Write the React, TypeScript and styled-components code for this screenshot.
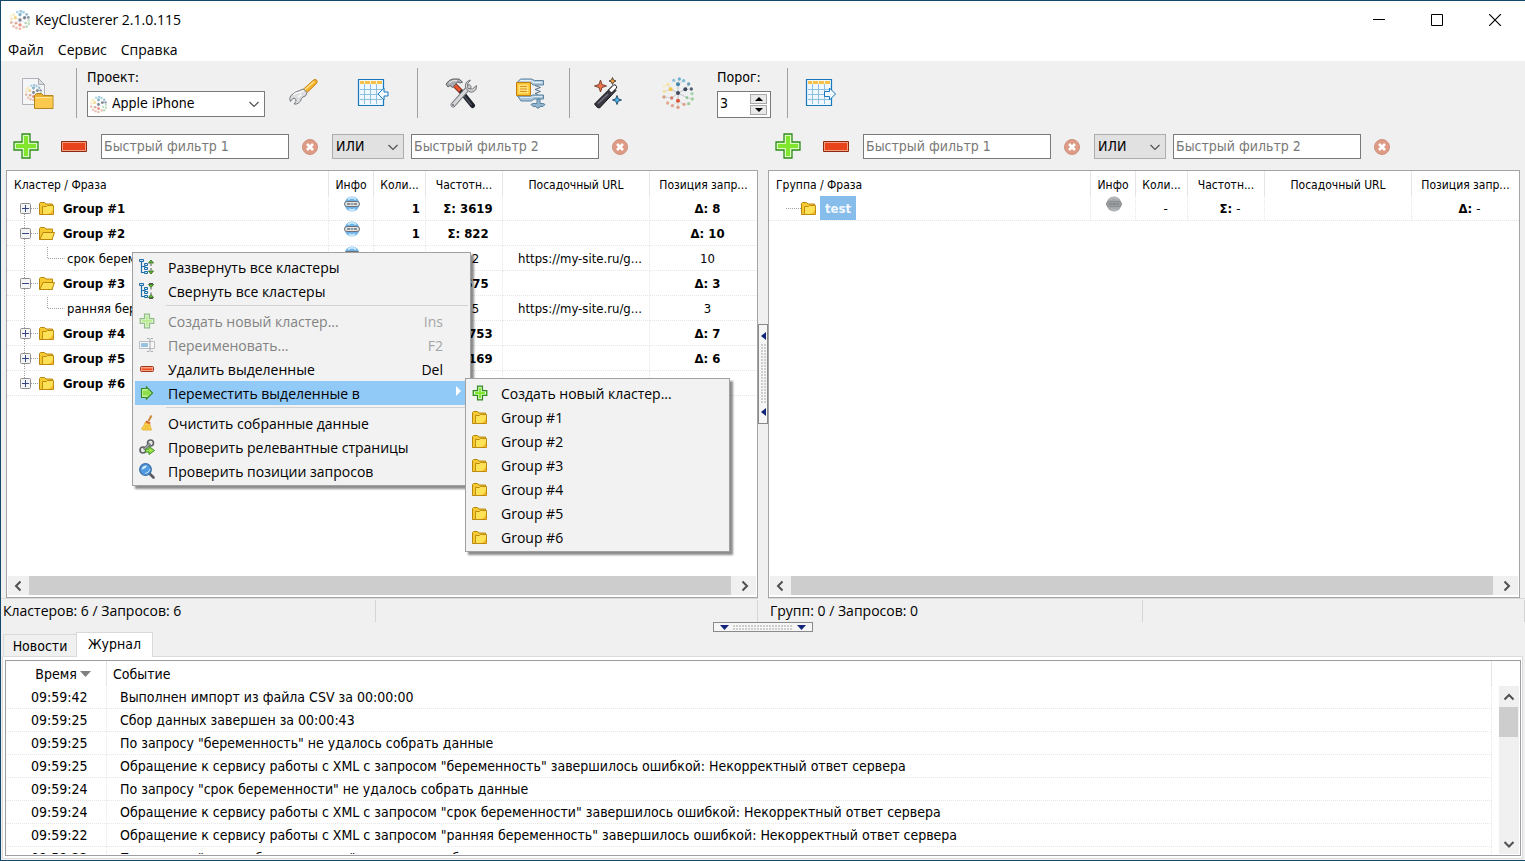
import React from "react";
import styled, { createGlobalStyle, css } from "styled-components";

const uiFont = `"Open Sans", "Noto Sans", sans-serif`;
const gridFont = `"DejaVu Sans Condensed", "DejaVu Sans", sans-serif`;

const GlobalStyle = createGlobalStyle`
  *, *::before, *::after { box-sizing: border-box; }
  body { margin: 0; background: #f0f0f0; color: #000; font-family: ${gridFont}; font-size: 13px; }
  button, input, select { font: inherit; color: inherit; margin: 0; padding: 0; border: 0; border-radius: 0; background: none; outline: 0; }
  button { display: flex; align-items: center; justify-content: center; }
  svg { display: block; flex: none; }
`;

const Window = styled.div`
  position: relative;
  display: flex;
  flex-direction: column;
  height: 100vh;
  overflow: hidden;
  border: solid #14496b;
  border-width: 1px 0 1px 1px;
  background: #f0f0f0;
`;

const TitleBar = styled.header`
  display: flex;
  align-items: center;
  flex: none;
  height: 37px;
  padding: 0 1px 0 9px;
  background: #fff;
  font: 14px/20px ${uiFont};
`;
const Title = styled.h1`
  flex: 1;
  margin: 0 0 0 5px;
  font: inherit;
`;
const CaptionButton = styled.button`
  width: 58px;
  height: 36px;
`;
const MenuBar = styled.nav`
  display: flex;
  flex: none;
  gap: 14px;
  height: 23px;
  padding: 1px 0 0 7px;
  background: #fff;
  font: 14px/22px ${uiFont};
`;

const Toolbar = styled.div`
  display: flex;
  flex: none;
  height: 65px;
  padding: 7px 2px 8px;
`;
const ToolButton = styled.button<{ $w?: number }>`
  flex: none;
  width: ${(p) => p.$w ?? 70}px;
  height: 50px;
`;
const Separator = styled.div<{ $before: number; $after: number }>`
  flex: none;
  width: 1px;
  height: 50px;
  margin: 0 ${(p) => p.$after}px 0 ${(p) => p.$before}px;
  background: #a0a0a0;
`;
const Field = styled.div<{ $w: number; $after?: number; $before?: number }>`
  display: flex;
  flex-direction: column;
  flex: none;
  gap: 5px;
  width: ${(p) => p.$w}px;
  margin: 0 ${(p) => p.$after ?? 0}px 0 ${(p) => p.$before ?? 0}px;
  font-size: 14px;
`;
const FieldLabel = styled.label`
  height: 18px;
  line-height: 18px;
`;
const Box = styled.div`
  display: flex;
  align-items: center;
  height: 26px;
  border: 1px solid #7a7a7a;
  background: #fff;
`;
const Combo = styled(Box)`
  padding: 0 4px 0 2px;
  gap: 5px;
`;
const ComboSelect = styled.select`
  flex: 1;
  min-width: 0;
  height: 24px;
  padding-bottom: 2px;
  appearance: none;
`;
const Spin = styled(Box)`
  height: 27px;
  padding: 0 3px 0 2px;
`;
const SpinInput = styled.input`
  flex: 1;
  min-width: 0;
  padding-bottom: 3px;
  appearance: textfield;
  &::-webkit-inner-spin-button { appearance: none; }
`;
const SpinButtons = styled.div`
  display: flex;
  flex-direction: column;
  gap: 1px;
`;
const SpinButton = styled.button`
  width: 17px;
  height: 10px;
  border: 1px solid #a8a8a8;
  background: #e9e9e9;
`;

const Workspace = styled.main`
  display: grid;
  grid-template-columns: minmax(0, 1fr) 10px minmax(0, 1fr);
  flex: 1;
  min-height: 0;
`;
const Pane = styled.section`
  display: flex;
  flex-direction: column;
  min-width: 0;
  min-height: 0;
`;
const FilterBar = styled.div<{ $side: "left" | "right" }>`
  display: flex;
  flex: none;
  align-items: flex-end;
  height: 44px;
  padding: 0 0 11px ${(p) => (p.$side === "left" ? 6 : 1)}px;
  font-size: 14px;
`;
const EditButton = styled.button`
  flex: none;
  width: 38px;
  height: 26px;
  margin-right: 10px;
`;
const FilterInput = styled.input`
  flex: none;
  width: 188px;
  height: 25px;
  padding: 0 2px 2px;
  border: 1px solid #7a7a7a;
  background: #fff;
  &::placeholder { color: #787878; opacity: 1; }
`;
const ClearButton = styled.button`
  flex: none;
  width: 42px;
  height: 25px;
`;
const LogicBox = styled.div`
  display: flex;
  align-items: center;
  flex: none;
  width: 72px;
  height: 25px;
  margin: 0 7px 0 1px;
  padding: 0 4px 0 3px;
  border: 1px solid #adadad;
  background: #e1e1e1;
`;
const FilterGroup = styled.div`
  display: flex;
  margin-left: -2px;
`;

const TreePanel = styled.div<{ $side: "left" | "right" }>`
  display: flex;
  flex-direction: column;
  flex: 1;
  min-height: 0;
  margin: ${(p) => (p.$side === "left" ? "0 0 0 5px" : "0 5px 0 0")};
  border: 1px solid #a3a3a8;
  background: #fff;
`;
const TreeBody = styled.div`
  flex: 1;
  min-height: 0;
  overflow: hidden;
`;
const DataTable = styled.table`
  width: 100%;
  table-layout: fixed;
  border-collapse: separate;
  border-spacing: 0;
`;
const Head = styled.th<{ $align?: string }>`
  height: 25px;
  padding: 2px 7px 0;
  border-right: 1px solid #e5e5e5;
  font-weight: 400;
  text-align: ${(p) => p.$align ?? "center"};
  white-space: nowrap;
  overflow: hidden;
  &:last-child { border-right: 0; }
`;
const TreeHead = styled(Head)`
  font-size: 12px;
  padding-left: ${(p) => (p.$align ? 7 : 0)}px;
  padding-right: 0;
`;
const dotted = css`
  border: dotted #e6e6e6;
  border-width: 0 1px 1px 0;
`;
const Cell = styled.td<{ $bold?: boolean; $align?: string }>`
  ${dotted}
  height: 25px;
  padding: 1px ${(p) => (p.$align === "right" ? 5 : 0)}px 0 8px;
  font-size: 13px;
  line-height: 16px;
  font-weight: ${(p) => (p.$bold ? 700 : 400)};
  text-align: ${(p) => p.$align ?? "center"};
  white-space: nowrap;
  overflow: hidden;
  &:last-child { border-right: 0; }
`;
const NameCell = styled(Cell)`
  padding: 0;
`;
const NameText = styled.span`
  padding-top: 1px;
`;
const Light = styled.span`
  font-weight: 400;
`;
const InfoCell = styled(Cell)`
  padding: 0 13px 8px 15px;
  line-height: 0;
`;
const NameRow = styled.div<{ $gap: number }>`
  display: flex;
  align-items: center;
  gap: ${(p) => p.$gap}px;
  height: 24px;
`;
const Selected = styled.span`
  height: 24px;
  padding: 0 5px;
  background: #86bdea;
  color: #f2f8fd;
  line-height: 25px;
`;

const HScroll = styled.div`
  display: flex;
  flex: none;
  height: 19px;
  margin: 0 1px 2px;
  background: #cdcdcd;
  justify-content: space-between;
`;
const ScrollButton = styled.button<{ $w: number; $h: number }>`
  flex: none;
  width: ${(p) => p.$w}px;
  height: ${(p) => p.$h}px;
  background: #f0f0f0;
`;

const StatusBar = styled.footer`
  display: grid;
  grid-template-columns: 375px 1fr;
  flex: none;
  height: 24px;
  padding: 1px 0;
  border-top: 1px solid #d9d9d9;
  font: 14px/22px ${uiFont};
`;
const StatusCell = styled.div`
  padding-left: 2px;
  border-right: 1px solid #d5d5d5;
`;

const SplitColumn = styled.div`
  display: flex;
  align-items: center;
`;
const Grip = styled.button<{ $vertical?: boolean }>`
  flex-direction: ${(p) => (p.$vertical ? "column" : "row")};
  width: ${(p) => (p.$vertical ? 10 : 100)}px;
  height: ${(p) => (p.$vertical ? 100 : 10)}px;
  gap: 4px;
  border: 1px solid #8a8a8a;
  background: #f6f6f6;
`;
const GripDots = styled.span<{ $vertical?: boolean }>`
  width: ${(p) => (p.$vertical ? 5 : 60)}px;
  height: ${(p) => (p.$vertical ? 60 : 5)}px;
  background: radial-gradient(circle at 1px 1px, #cfcfcf 1px, transparent 1px) 0 0 / 3px 3px;
`;

const Dock = styled.section`
  display: flex;
  flex-direction: column;
  flex: none;
  align-items: center;
  height: 238px;
  padding-bottom: 1px;
`;
const Tabs = styled.div`
  display: flex;
  align-items: flex-end;
  align-self: stretch;
  height: 25px;
  margin-bottom: -1px;
  padding-left: 2px;
  font-size: 14px;
  z-index: 1;
`;
const Tab = styled.button<{ $active?: boolean }>`
  width: ${(p) => (p.$active ? 77 : 73)}px;
  height: ${(p) => (p.$active ? 25 : 22)}px;
  margin-bottom: ${(p) => (p.$active ? 0 : 1)}px;
  padding-bottom: ${(p) => (p.$active ? 2 : 0)}px;
  border: 1px solid #d9d9d9;
  border-bottom: 0;
  border-right-width: ${(p) => (p.$active ? 1 : 0)}px;
  background: ${(p) => (p.$active ? "#fff" : "#f0f0f0")};
`;
const TabPage = styled.div`
  align-self: stretch;
  display: flex;
  flex: 1;
  min-height: 0;
  margin: 0 2px 0 1px;
  padding: 3px 1px 2px 2px;
  border: 1px solid #dcdcdc;
  background: #fff;
`;
const LogBox = styled.div`
  display: flex;
  flex: 1;
  min-width: 0;
  overflow: hidden;
  border: 1px solid #9d9da3;
  padding-bottom: 1px;
`;
const LogView = styled.div`
  flex: 1;
  min-width: 0;
  overflow: hidden;
  font-size: 14px;
`;
const LogHead = styled(Head)`
  padding: 0 0 0 ${(p) => (p.$align === "left" ? 6 : 14)}px;
  &:last-child { border-right: 1px solid #e5e5e5; }
`;
const SortLabel = styled.span`
  display: flex;
  align-items: center;
  justify-content: center;
  gap: 3px;
`;
const LogCell = styled.td<{ $indent: number }>`
  ${dotted}
  height: 23px;
  padding: 0 0 0 ${(p) => p.$indent}px;
  font-size: 14px;
  line-height: 20px;
  white-space: nowrap;
`;
const VScroll = styled.div`
  display: flex;
  flex-direction: column;
  flex: none;
  width: 20px;
  margin: 25px 1px 0 7px;
  background: #f0f0f0;
`;
const VThumb = styled.div`
  height: 30px;
  width: 19px;
  background: #cdcdcd;
`;
const VSpace = styled.div`
  flex: 1;
`;

const PopupMenu = styled.div<{ $x: number; $y: number; $w: number }>`
  position: absolute;
  left: ${(p) => p.$x}px;
  top: ${(p) => p.$y}px;
  width: ${(p) => p.$w}px;
  padding: 2px;
  border: 1px solid #a0a0a0;
  background: #f2f2f2;
  box-shadow: 3px 3px 2px rgba(0, 0, 0, 0.45);
  font: 14px/22px ${uiFont};
`;
const MenuItem = styled.button<{ $hot?: boolean }>`
  justify-content: flex-start;
  width: 100%;
  height: 24px;
  padding: 0 0 0 4px;
  background: ${(p) => (p.$hot ? "#91c9f7" : "none")};
  white-space: nowrap;
  &:disabled { color: #838383; }
  &:disabled svg { opacity: 0.5; }
`;
const MenuText = styled.span`
  flex: 1;
  margin-left: 13px;
  padding-top: 2px;
  text-align: left;
`;
const Shortcut = styled.span`
  margin-right: 25px;
  padding-top: 2px;
  ${MenuItem}:disabled & { color: #a5a5a5; }
`;
const MenuRule = styled.hr`
  height: 1px;
  margin: 2px 0 3px 31px;
  border: 0;
  background: #d2d2d2;
`;
const SubArrow = styled.svg`
  margin: 0 7px 5px 0;
`;

/* ---------- icons ---------- */

const clusterDots: [number, number, number, string][] = [
  [48, 48, 6, "#424a5c"], [48, 22, 6, "#3f86a8"], [35, 10, 5, "#8cc3da"], [52, 6, 5, "#6cb2d0"],
  [65, 11, 5, "#7dbbd6"], [80, 21, 5, "#6a9db6"], [70, 37, 6, "#39465c"], [88, 36, 5, "#52607a"],
  [90, 50, 5, "#a8d6ae"], [91, 66, 5, "#a3d0a0"], [80, 80, 5, "#9dcc9f"], [75, 62, 4, "#8cc393"],
  [48, 71, 6, "#de5236"], [66, 82, 5, "#e0a18c"], [48, 91, 5, "#e29a80"], [31, 86, 5, "#dfa58f"],
  [17, 78, 5, "#e3a88f"], [6, 60, 5, "#d79a84"], [29, 63, 5, "#cf7d66"], [26, 37, 6, "#f0c64c"],
  [18, 22, 5, "#f5e49c"], [6, 28, 4, "#f6ecb8"], [7, 43, 5, "#f3dfa0"],
];

const ClusterLogo = ({ size }: { size: number }) => (
  <svg width={size} height={size} viewBox="0 0 96 96" opacity={size < 24 ? 0.65 : 1}>
    {[1, 6, 12, 19, 18, 11].map((i) => (
      <path key={i} d={`M48 48L${clusterDots[i][0]} ${clusterDots[i][1]}`} stroke="#a9adb4" strokeWidth="2" />
    ))}
    {[[1, 2], [1, 3], [1, 4], [6, 5], [6, 7], [11, 9], [12, 13], [12, 14], [12, 15], [18, 17], [19, 20], [19, 22]].map(([a, b]) => (
      <path key={`${a}-${b}`} d={`M${clusterDots[a][0]} ${clusterDots[a][1]}L${clusterDots[b][0]} ${clusterDots[b][1]}`} stroke="#c4c8cd" strokeWidth="2" />
    ))}
    {clusterDots.map(([x, y, r, c]) => (
      <circle key={`${x}-${y}`} cx={x} cy={y} r={size < 24 ? r + 2 : r} fill={c} />
    ))}
  </svg>
);

const Chevron = ({ d, color = "#505050", w = 1.2 }: { d: "down" | "up" | "left" | "right"; color?: string; w?: number }) => {
  const paths = { down: "M1.500 4L6 8.500L10.500 4", up: "M1.500 8.500L6 4L10.500 8.500", left: "M7.500 1.500L3 6L7.500 10.500", right: "M4.500 1.500L9 6L4.500 10.500" };
  return (
    <svg width="12" height="12" viewBox="0 0 12 12">
      <path d={paths[d]} fill="none" stroke={color} strokeWidth={w} />
    </svg>
  );
};

const ProjectIcon = () => (
  <svg width="32" height="32" viewBox="0 0 32 32">
    <path d="M.5 1.500h16l6 6v20H.5z" fill="#f5f6f8" stroke="#b0b3b8" />
    <path d="M16.500 1.500v6h6z" fill="#dcdee2" stroke="#a6a9ae" />
    <g transform="translate(3 7)"><ClusterLogo size={17} /></g>
    <path d="M12.500 18.500l2-2h5l2 2h9.500v13h-18.500z" fill="#e8b02e" stroke="#b58522" />
    <path d="M13 20h17.500v11H13z" fill="#fbc94d" />
    <path d="M13.500 20.500h16.500" stroke="#fee69a" />
  </svg>
);

const WrenchIcon = () => (
  <svg width="32" height="32" viewBox="0 0 32 32">
    <path d="M16 12.500L26 3.500q2-2 3.500-.500t0 3.500L19.500 16z" fill="#f6b32c" stroke="#c58117" />
    <path d="M17.500 13L27 4.500" stroke="#ffe08a" strokeWidth="1.600" />
    <path d="M12.500 13.500l4-1.500 3.500 3.500-1.500 3.500q-3 .500-4 2.500-.500 3-3 4.500-2 1.500-4.500 1 2.500-2.500 2-4.500l-2-1.500q-2 .500-3.500 3.500-2-3 .500-6t8.500-5z" fill="#dcdee0" stroke="#77797e" />
    <path d="M6.500 17.500q4-2.500 7-2l3-2M11 20l3.500-2.500" fill="none" stroke="#fff" strokeWidth="1.300" />
  </svg>
);

const TableIcon = ({ out }: { out?: boolean }) => (
  <svg width="32" height="32" viewBox="0 0 32 32">
    <path d="M1.500 2.500h25v26h-25z" fill="#eef8fe" stroke="#1878bd" strokeWidth="1.200" />
    <path d="M3 4h22v3H3z" fill="#f6c04a" />
    <path d="M3 12.500h22M3 17.500h22M3 22.500h22M7.500 7v20M13.500 7v20M19.500 7v20" stroke="#8dc0dc" />
    <path d="M7.500 4v3M13.500 4v3M19.500 4v3" stroke="#fff3d0" />
    {out ? (
      <path d="M19.500 14.500h5v-3.500l6 6-6 6v-3.500h-5z" fill="#f2fafe" stroke="#1878bd" />
    ) : (
      <path d="M31 15h-4v-4l-6 6 6 6v-4h4z" fill="#f2fafe" stroke="#1878bd" />
    )}
  </svg>
);

const ToolsIcon = () => (
  <svg width="32" height="32" viewBox="0 0 32 32">
    <path d="M9.500 8l8 8" stroke="#7d3323" strokeWidth="5" />
    <path d="M9.500 8l8 8" stroke="#ec5630" strokeWidth="3" />
    <path d="M17 15.500l10.500 13" stroke="#1c2028" strokeWidth="5" strokeLinecap="round" />
    <path d="M17.500 17l9 11" stroke="#4e5663" strokeWidth="1.300" />
    <path d="M1 7q3-4.500 7-5h6l3.500 3-2 1-3-1-5 5.500-2.500-2-2 1.500z" fill="#a9acb0" stroke="#5d6064" />
    <path d="M4 6q3-3 8-2.500" stroke="#eee" fill="none" />
    <path d="M8 28L24 10" stroke="#77797d" strokeWidth="5" strokeLinecap="round" />
    <path d="M8 28L24 10" stroke="#d4d6d9" strokeWidth="3.300" strokeLinecap="round" />
    <path d="M25.500 3l-3 4 .500 4.500 4.500.500 4-3.500q.500 4-2.500 6-3 1.500-5 0l-3-3q-1.500-3 0-5.500t4.500-3z" fill="#cfd1d4" stroke="#77797d" />
    <circle cx="8" cy="28" r="1" fill="#6b6d70" />
  </svg>
);

const ArchiveIcon = () => (
  <svg width="32" height="32" viewBox="0 0 32 32">
    <path d="M2.500 5l3-3h11l3 1.500h9v4.500H18l-2-2H2.500z" fill="#b4cbde" stroke="#5b84a3" />
    <path d="M5 3.500h11l3 2h8" stroke="#e6f0f7" fill="none" />
    <path d="M2.500 19h13l2-1h11v4H19l-2.500 2H6z" fill="#a7c3d9" stroke="#5b84a3" />
    <path d="M5 20.500h11l3-1h8" stroke="#dde9f2" fill="none" />
    <path d="M20 8.500l5.500 2-5.500 2 5.500 2-5.500 2 3 1" fill="none" stroke="#55708a" />
    <path d="M22 22h3v4.500h3l2 1-2 2h-3l-1 1.500h-2l-1-1.500h-3l-2-2 2-1h4z" fill="#93b4cd" stroke="#5b84a3" />
    <path d="M1.500 5.500h14v13h-14z" fill="#fbc22f" stroke="#c57e12" />
    <path d="M3.500 7.500h10v9h-10z" fill="#ffe27a" />
    <path d="M5 9.500h7M5 12h7M5 14.500h7" stroke="#d48f1c" />
  </svg>
);

const WandIcon = () => (
  <svg width="32" height="32" viewBox="0 0 32 32">
    <path d="M5.500 30.500l-3-3.500L20 9.500l4 4L7.500 31z" fill="#3a3844" stroke="#111" />
    <path d="M16.500 13l5-5q1.500-.500 2.500.500t.500 2.500l-5 5z" fill="#fff" stroke="#16141c" />
    <path d="M6 26.500L16 17" stroke="#77757f" strokeWidth="1.300" />
    <path d="M8.500 3l1.500 4.500 4.500 1.500-4.500 1.500L8.500 15 7 10.500 2.500 9 7 7.500z" fill="#ef7448" stroke="#7a4130" />
    <path d="M20.500 .5l1 2.500 2.500 1-2.500 1-1 2.500-1-2.500-2.500-1 2.500-1z" fill="#f9a33b" stroke="#5c4a3a" />
    <path d="M25 18.500l1.200 3.300 3.300 1.200-3.300 1.200L25 27.500l-1.200-3.300L20.500 23l3.300-1.200z" fill="#4db4ec" stroke="#27506c" />
  </svg>
);

const PlusIcon = ({ size = 26 }: { size?: number }) => (
  <svg width={size} height={size} viewBox="0 0 26 26">
    <path d={size > 20 ? "M9 1h8v8h8v8h-8v8H9v-8H1V9h8z" : "M9 2h8v7h7v8h-7v7H9v-7H2V9h7z"} fill="#d9fbc0" stroke="#2f8a1c" strokeWidth={size > 20 ? 1.3 : 2} />
    <path d={size > 20 ? "M11 3h4v8h8v4h-8v8h-4v-8H3v-4h8z" : "M11.500 5h3v6.500H21v3h-6.500V21h-3v-6.500H5v-3h6.500z"} fill="#82e62f" />
  </svg>
);

const MinusIcon = () => (
  <svg width="26" height="11" viewBox="0 0 26 11">
    <path d="M.5.5h25v10H.5z" fill="#f0a080" stroke="#8e2a10" />
    <path d="M2 2h22v7H2z" fill="#e8441b" />
  </svg>
);

const SmallMinusIcon = () => (
  <svg width="16" height="16" viewBox="0 0 16 16">
    <rect x="1.500" y="5.500" width="13" height="5" rx="1" fill="#f6a184" stroke="#a3361a" />
    <path d="M3 7.500h10v1.500H3z" fill="#ea481d" />
  </svg>
);

const ClearIcon = () => (
  <svg width="16" height="16" viewBox="0 0 16 16">
    <circle cx="8" cy="8" r="7.500" fill="#dd9a84" stroke="#cf917d" />
    <path d="M5 5l6 6M11 5l-6 6" stroke="#fff" strokeWidth="2.600" />
  </svg>
);

const FolderIcon = ({ open }: { open?: boolean }) => (
  <svg width="16" height="16" viewBox="0 0 16 16">
    <path d="M.5 14.500v-11l1-1h4l1.500 1.500h6.500v10.500z" fill="#f6cb32" stroke="#b8860c" />
    {open ? (
      <path d="M.8 14.500L4 7.500h11.500l-2.500 7z" fill="#fddf55" stroke="#b8860c" />
    ) : (
      <>
        <path d="M3.500 6.500h4l1-1h6v9h-11z" fill="#fde257" stroke="#c08c10" />
        <path d="M14 9v5H9q4-1.500 5-5z" fill="#f7b92a" />
      </>
    )}
  </svg>
);

const LinkIcon = ({ muted }: { muted?: boolean }) => (
  <svg width="16" height="16" viewBox="0 0 16 16">
    <circle cx="8" cy="8" r="7.500" fill={muted ? "#a6a9ab" : "#6fb3e6"} />
    <path d="M4 3.500Q8 0 12 3.500M5 13q3 2.500 6 0" fill="none" stroke={muted ? "#b4b6b8" : "#c6e8fb"} strokeWidth="2" />
    <rect x=".5" y="5.500" width="15" height="5" rx="2.500" fill={muted ? "#9da0a2" : "#e4e6e7"} stroke={muted ? "#8b8e90" : "#6b6f72"} />
    <path d="M3 8h3M10 8h3" stroke={muted ? "#85888a" : "#6e7275"} strokeWidth="1.400" />
    <path d="M6.500 8h3" stroke={muted ? "#85888a" : "#9a9ea1"} strokeWidth="2" />
  </svg>
);

const TreeIcon = ({ collapse }: { collapse?: boolean }) => (
  <svg width="16" height="16" viewBox="0 0 16 16">
    <path d="M2.500 3v10.500h4M2.500 7.500h4" fill="none" stroke="#1d6fa8" strokeWidth="1.200" />
    <path d="M.5.5h4v2h-4zM5.500 4.500h3v2h-3zM5.500 8.500h3v2h-3zM5.500 12.500h3v2h-3z" fill="#c9e5f6" stroke="#1d6fa8" />
    <path d={collapse ? "M9.500 1.500h5L12 4.500zM9.500 14.500h5L12 11.500z" : "M9.500 4h5L12 1zM9.500 12h5L12 15z"} fill="#6cbf3c" stroke="#3f7a2a" />
    <path d={collapse ? "M12 4.500v2M12 9.500v2M10 .500h4M10 15.500h4" : "M12 4.500v2.500M12 9v2.500"} stroke="#555" />
  </svg>
);

const RenameIcon = () => (
  <svg width="16" height="16" viewBox="0 0 16 16">
    <path d="M.5 4.500h15v7H.5z" fill="#fff" stroke="#7d8a94" />
    <path d="M2 6h7v4H2z" fill="#3f94cf" />
    <path d="M8 1.500h2l1 1 1-1h2M8 14.500h2l1-1 1 1h2M11 2.500v11" fill="none" stroke="#55606a" />
  </svg>
);

const MoveIcon = () => (
  <svg width="16" height="16" viewBox="0 0 16 16">
    <path d="M2.500 3.500h5v-1.500l6 6-6 6v-1.500h-5z" fill="#c9f3a3" stroke="#388a27" strokeWidth="1.200" />
    <path d="M4 5.500h4.500v-1l3.500 3.500-3.500 3.500v-1H4z" fill="#8be048" />
  </svg>
);

const BroomIcon = () => (
  <svg width="16" height="16" viewBox="0 0 16 16">
    <path d="M12.500.5L9.500 6" stroke="#c98a3a" strokeWidth="2" />
    <path d="M7.500 5.500l4 2-.500 2-5-2z" fill="#d8642c" />
    <path d="M6 7.500l5 2q.500 3 1.500 5.500H3.500l-1-1.500Q5 11.500 6 7.500z" fill="#fbd24a" stroke="#dca42a" strokeWidth=".7" />
    <path d="M6 14l1.500-4M9 14.500v-4" stroke="#e2a629" strokeWidth=".7" />
  </svg>
);

const LinkCheckIcon = () => (
  <svg width="16" height="16" viewBox="0 0 16 16">
    <circle cx="11.500" cy="4" r="3" fill="#e4e6e7" stroke="#5f6265" strokeWidth="1.600" />
    <circle cx="4" cy="11" r="3" fill="#e4e6e7" stroke="#5f6265" strokeWidth="1.600" />
    <path d="M5 10.500l6-6" stroke="#6d7073" strokeWidth="3" />
    <path d="M5.500 10l5-5" stroke="#c9cbcd" />
    <path d="M6.500 10h3.500V7.500l5.500 4-5.500 4V13H6.500z" fill="#9be34b" stroke="#3f8a27" />
  </svg>
);

const SearchIcon = () => (
  <svg width="16" height="16" viewBox="0 0 16 16">
    <path d="M10.500 10.500l4 4" stroke="#5a5d63" strokeWidth="2.600" strokeLinecap="round" />
    <circle cx="6.500" cy="6.500" r="5.800" fill="#4f9ae0" stroke="#3c6ea6" strokeWidth="1.300" />
    <path d="M2.500 6.500q1-4 5.500-4Q7 5.500 2.500 6.500z" fill="#dff0fc" />
    <path d="M6 10.500q4-.500 5-4.500" stroke="#bfe0fa" fill="none" />
  </svg>
);

const Triangle = ({ d, w, h, color }: { d: string; w: number; h: number; color: string }) => (
  <svg width={w} height={h} viewBox={`0 0 ${w} ${h}`}><path d={d} fill={color} /></svg>
);

/* Connector lines and the expand box on the left of a tree row */
type NodeKind = "closed" | "open" | "leaf" | "single";
const TreeLines = ({ kind, first, last }: { kind: NodeKind; first?: boolean; last?: boolean }) => {
  const line = { stroke: "#a0a0a0", strokeDasharray: "1 1", fill: "none" };
  if (kind === "single") return <svg width="32" height="24"><path d="M17 12.500h15" {...line} /></svg>;
  if (kind === "leaf")
    return (
      <svg width="58" height="24">
        <path d="M17.500 0v24M40.500 1v11.500h17" {...line} />
      </svg>
    );
  return (
    <svg width="32" height="24">
      {!first && <path d="M17.500 0v8" {...line} />}
      {!last && <path d="M17.500 18v6" {...line} />}
      <path d="M24 12.500h8" {...line} />
      <rect x="13.500" y="7.500" width="10" height="10" rx="1" fill="#f4f4f4" stroke="#8e8e8e" />
      <path d={kind === "closed" ? "M15 12.500h7M18.500 9v7" : "M15 12.500h7"} stroke="#34458a" />
    </svg>
  );
};

/* ---------- tree tables ---------- */

type Row = { kind: NodeKind; name: string; count?: string; freq: string; url?: string; pos: string };

const clusters: Row[] = [
  { kind: "closed", name: "Group #1", count: "1", freq: "Σ: 3619", pos: "Δ: 8" },
  { kind: "open", name: "Group #2", count: "1", freq: "Σ: 822", pos: "Δ: 10" },
  { kind: "leaf", name: "срок беременности", freq: "822", url: "https://my-site.ru/g...", pos: "10" },
  { kind: "open", name: "Group #3", count: "1", freq: "Σ: 675", pos: "Δ: 3" },
  { kind: "leaf", name: "ранняя беременность", freq: "675", url: "https://my-site.ru/g...", pos: "3" },
  { kind: "closed", name: "Group #4", count: "1", freq: "Σ: 2753", pos: "Δ: 7" },
  { kind: "closed", name: "Group #5", count: "1", freq: "Σ: 1169", pos: "Δ: 6" },
  { kind: "closed", name: "Group #6", count: "1", freq: "Σ: 1020", pos: "Δ: 9" },
];
const groups: Row[] = [{ kind: "single", name: "test", count: "-", freq: "Σ: -", pos: "Δ: -" }];

/* An empty total keeps its bold sign but shows a regular dash */
const Total = ({ value }: { value: string }) =>
  value.endsWith("-") ? <>{value.slice(0, -1)}<Light>-</Light></> : <>{value}</>;

const TreeTable = ({ title, rows }: { title: string; rows: Row[] }) => (
  <DataTable>
    <colgroup>
      <col />
      <col style={{ width: 45 }} />
      <col style={{ width: 52 }} />
      <col style={{ width: 77 }} />
      <col style={{ width: 147 }} />
      <col style={{ width: 107 }} />
    </colgroup>
    <thead>
      <tr>
        <TreeHead $align="left">{title}</TreeHead>
        <TreeHead>Инфо</TreeHead>
        <TreeHead>Коли...</TreeHead>
        <TreeHead>Частотн...</TreeHead>
        <TreeHead>Посадочный URL</TreeHead>
        <TreeHead>Позиция запр...</TreeHead>
      </tr>
    </thead>
    <tbody>
      {rows.map((r, i) => {
        const bold = r.kind !== "leaf";
        return (
          <tr key={r.name}>
            <NameCell $bold={bold} $align="left">
              <NameRow $gap={r.kind === "leaf" ? 2 : r.kind === "single" ? 3 : 8}>
                <NameRow $gap={0}>
                  <TreeLines kind={r.kind} first={i === 0} last={i === rows.length - 1} />
                  {bold && <FolderIcon open={r.kind === "open"} />}
                </NameRow>
                {r.kind === "single" ? <Selected>{r.name}</Selected> : <NameText>{r.name}</NameText>}
              </NameRow>
            </NameCell>
            <InfoCell><LinkIcon muted={r.kind === "single"} /></InfoCell>
            <Cell $bold={r.count !== "-"} $align={r.count === "-" ? "center" : "right"}>{r.count}</Cell>
            <Cell $bold={bold}><Total value={r.freq} /></Cell>
            <Cell>{r.url}</Cell>
            <Cell $bold={bold}><Total value={r.pos} /></Cell>
          </tr>
        );
      })}
    </tbody>
  </DataTable>
);

const TreePane = ({ side, title, rows, status }: { side: "left" | "right"; title: string; rows: Row[]; status: string }) => (
  <Pane>
    <FilterBar $side={side}>
      <EditButton aria-label="Добавить"><PlusIcon /></EditButton>
      <EditButton aria-label="Удалить"><MinusIcon /></EditButton>
      <FilterGroup>
        <FilterInput type="text" placeholder="Быстрый фильтр 1" aria-label="Быстрый фильтр 1" />
        <ClearButton aria-label="Очистить фильтр 1"><ClearIcon /></ClearButton>
        <LogicBox>
          <ComboSelect aria-label="Логика фильтров" defaultValue="or">
            <option value="or">ИЛИ</option>
            <option value="and">И</option>
          </ComboSelect>
          <Chevron d="down" />
        </LogicBox>
        <FilterInput type="text" placeholder="Быстрый фильтр 2" aria-label="Быстрый фильтр 2" />
        <ClearButton aria-label="Очистить фильтр 2"><ClearIcon /></ClearButton>
      </FilterGroup>
    </FilterBar>
    <TreePanel $side={side}>
      <TreeBody><TreeTable title={title} rows={rows} /></TreeBody>
      <HScroll>
        <ScrollButton $w={21} $h={19} aria-label="Влево"><Chevron d="left" w={2} /></ScrollButton>
        <ScrollButton $w={25} $h={19} aria-label="Вправо"><Chevron d="right" w={2} /></ScrollButton>
      </HScroll>
    </TreePanel>
    <StatusBar>
      <StatusCell>{status}</StatusCell>
      <StatusCell />
    </StatusBar>
  </Pane>
);

/* ---------- log ---------- */

const log: [string, string][] = [
  ["09:59:42", "Выполнен импорт из файла CSV за 00:00:00"],
  ["09:59:25", "Сбор данных завершен за 00:00:43"],
  ["09:59:25", 'По запросу "беременность" не удалось собрать данные'],
  ["09:59:25", 'Обращение к сервису работы с XML с запросом "беременность" завершилось ошибкой: Некорректный ответ сервера'],
  ["09:59:24", 'По запросу "срок беременности" не удалось собрать данные'],
  ["09:59:24", 'Обращение к сервису работы с XML с запросом "срок беременности" завершилось ошибкой: Некорректный ответ сервера'],
  ["09:59:22", 'Обращение к сервису работы с XML с запросом "ранняя беременность" завершилось ошибкой: Некорректный ответ сервера'],
  ["09:59:22", 'По запросу "ранняя беременность" не удалось собрать данные'],
];

export default function App() {
  return (
    <Window>
      <GlobalStyle />
      <TitleBar>
        <ClusterLogo size={20} />
        <Title>KeyClusterer 2.1.0.115</Title>
        <CaptionButton aria-label="Свернуть">
          <svg width="12" height="12"><path d="M0 5.500h12" stroke="#000" /></svg>
        </CaptionButton>
        <CaptionButton aria-label="Развернуть">
          <svg width="12" height="12"><path d="M.5.5h11v11H.5z" fill="none" stroke="#000" /></svg>
        </CaptionButton>
        <CaptionButton aria-label="Закрыть">
          <svg width="12" height="12"><path d="M0 0L12 12M12 0L0 12" stroke="#000" strokeWidth="1.200" /></svg>
        </CaptionButton>
      </TitleBar>
      <MenuBar>
        <button>Файл</button>
        <button>Сервис</button>
        <button>Справка</button>
      </MenuBar>

      <Toolbar>
        <ToolButton aria-label="Новый проект"><ProjectIcon /></ToolButton>
        <Separator $before={3} $after={10} />
        <Field $w={178} $after={3}>
          <FieldLabel htmlFor="project">Проект:</FieldLabel>
          <Combo>
            <ClusterLogo size={17} />
            <ComboSelect id="project" defaultValue="iphone">
              <option value="iphone">Apple iPhone</option>
            </ComboSelect>
            <Chevron d="down" />
          </Combo>
        </Field>
        <ToolButton aria-label="Параметры проекта"><WrenchIcon /></ToolButton>
        <ToolButton aria-label="Импорт"><TableIcon /></ToolButton>
        <Separator $before={9} $after={8} />
        <ToolButton aria-label="Настройки"><ToolsIcon /></ToolButton>
        <ToolButton aria-label="Архив"><ArchiveIcon /></ToolButton>
        <Separator $before={3} $after={3} />
        <ToolButton aria-label="Сбор данных"><WandIcon /></ToolButton>
        <ToolButton aria-label="Кластеризация"><ClusterLogo size={32} /></ToolButton>
        <Field $w={54} $before={4}>
          <FieldLabel htmlFor="threshold">Порог:</FieldLabel>
          <Spin>
            <SpinInput id="threshold" type="number" defaultValue={3} />
            <SpinButtons>
              <SpinButton aria-label="Больше"><Triangle d="M0 4L4 0L8 4z" w={8} h={4} color="#000" /></SpinButton>
              <SpinButton aria-label="Меньше"><Triangle d="M0 0L4 4L8 0z" w={8} h={4} color="#000" /></SpinButton>
            </SpinButtons>
          </Spin>
        </Field>
        <Separator $before={16} $after={8} />
        <ToolButton $w={50} aria-label="Экспорт"><TableIcon out /></ToolButton>
      </Toolbar>

      <Workspace>
        <TreePane side="left" title="Кластер / Фраза" rows={clusters} status="Кластеров: 6 / Запросов: 6" />
        <SplitColumn>
          <Grip $vertical aria-label="Свернуть панель">
            <Triangle d="M5 0v8L0 4z" w={5} h={8} color="#12257a" />
            <GripDots $vertical />
            <Triangle d="M5 0v8L0 4z" w={5} h={8} color="#12257a" />
          </Grip>
        </SplitColumn>
        <TreePane side="right" title="Группа / Фраза" rows={groups} status="Групп: 0 / Запросов: 0" />
      </Workspace>

      <Dock>
        <Grip aria-label="Свернуть журнал">
          <Triangle d="M0 0h9L4.500 5z" w={9} h={5} color="#12257a" />
          <GripDots />
          <Triangle d="M0 0h9L4.500 5z" w={9} h={5} color="#12257a" />
        </Grip>
        <Tabs role="tablist">
          <Tab role="tab">Новости</Tab>
          <Tab role="tab" $active>Журнал</Tab>
        </Tabs>
        <TabPage>
          <LogBox>
            <LogView>
              <DataTable>
                <colgroup>
                  <col style={{ width: 101 }} />
                  <col />
                </colgroup>
                <thead>
                  <tr>
                    <LogHead>
                      <SortLabel>Время <Triangle d="M0 0h11L5.500 6z" w={11} h={6} color="#808080" /></SortLabel>
                    </LogHead>
                    <LogHead $align="left">Событие</LogHead>
                  </tr>
                </thead>
                <tbody>
                  {log.map(([time, text]) => (
                    <tr key={time + text}>
                      <LogCell $indent={25}>{time}</LogCell>
                      <LogCell $indent={13}>{text}</LogCell>
                    </tr>
                  ))}
                </tbody>
              </DataTable>
            </LogView>
            <VScroll>
              <ScrollButton $w={20} $h={21} aria-label="Вверх"><Chevron d="up" w={2} /></ScrollButton>
              <VThumb />
              <VSpace />
              <ScrollButton $w={20} $h={21} aria-label="Вниз"><Chevron d="down" w={2} /></ScrollButton>
            </VScroll>
          </LogBox>
        </TabPage>
      </Dock>

      <PopupMenu role="menu" $x={131} $y={251} $w={339}>
        <MenuItem role="menuitem"><TreeIcon /><MenuText>Развернуть все кластеры</MenuText></MenuItem>
        <MenuItem role="menuitem"><TreeIcon collapse /><MenuText>Свернуть все кластеры</MenuText></MenuItem>
        <MenuRule />
        <MenuItem role="menuitem" disabled><PlusIcon size={16} /><MenuText>Создать новый кластер...</MenuText><Shortcut>Ins</Shortcut></MenuItem>
        <MenuItem role="menuitem" disabled><RenameIcon /><MenuText>Переименовать...</MenuText><Shortcut>F2</Shortcut></MenuItem>
        <MenuItem role="menuitem"><SmallMinusIcon /><MenuText>Удалить выделенные</MenuText><Shortcut>Del</Shortcut></MenuItem>
        <MenuItem role="menuitem" $hot aria-haspopup="menu">
          <MoveIcon /><MenuText>Переместить выделенные в</MenuText>
          <SubArrow width="5" height="10"><path d="M0 0l5 5-5 5z" fill="#fff" /></SubArrow>
        </MenuItem>
        <MenuRule />
        <MenuItem role="menuitem"><BroomIcon /><MenuText>Очистить собранные данные</MenuText></MenuItem>
        <MenuItem role="menuitem"><LinkCheckIcon /><MenuText>Проверить релевантные страницы</MenuText></MenuItem>
        <MenuItem role="menuitem"><SearchIcon /><MenuText>Проверить позиции запросов</MenuText></MenuItem>
      </PopupMenu>

      <PopupMenu role="menu" $x={464} $y={377} $w={265}>
        <MenuItem role="menuitem"><PlusIcon size={16} /><MenuText>Создать новый кластер...</MenuText></MenuItem>
        {[1, 2, 3, 4, 5, 6].map((n) => (
          <MenuItem role="menuitem" key={n}><FolderIcon /><MenuText>Group #{n}</MenuText></MenuItem>
        ))}
      </PopupMenu>
    </Window>
  );
}
